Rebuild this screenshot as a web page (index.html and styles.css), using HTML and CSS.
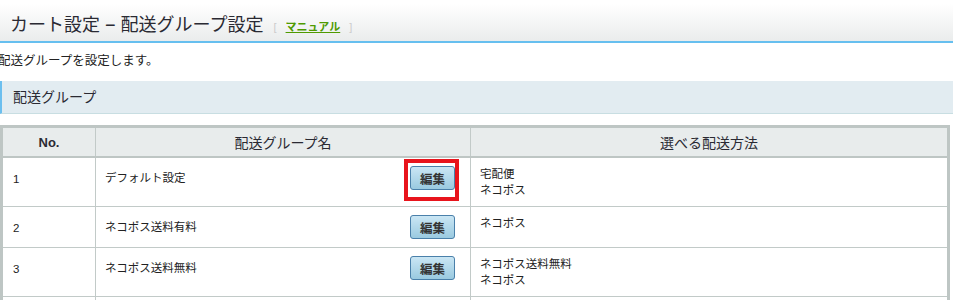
FILE: index.html
```html
<!DOCTYPE html>
<html lang="ja">
<head>
  <meta charset="UTF-8">
  <title>カート設定 - 配送グループ設定</title>
  <link rel="stylesheet" href="styles.css">
</head>
<body>
  <div class="page-head">
    <h1>カート設定 − 配送グループ設定</h1>
    <span class="manual">[ <a href="#">マニュアル</a> ]</span>
  </div>
  <p class="lead">配送グループを設定します。</p>
  <h2 class="section">配送グループ</h2>
  <table class="groups">
    <thead>
      <tr>
        <th class="col-no">No.</th>
        <th class="col-name">配送グループ名</th>
        <th>選べる配送方法</th>
      </tr>
    </thead>
    <tbody>
      <tr>
        <td>1</td>
        <td><div class="name-cell"><span>デフォルト設定</span><span class="btn-wrap marked"><button class="btn">編集</button></span></div></td>
        <td>宅配便<br>ネコポス</td>
      </tr>
      <tr>
        <td>2</td>
        <td><div class="name-cell"><span>ネコポス送料有料</span><span class="btn-wrap"><button class="btn">編集</button></span></div></td>
        <td>ネコポス</td>
      </tr>
      <tr>
        <td>3</td>
        <td><div class="name-cell"><span>ネコポス送料無料</span><span class="btn-wrap"><button class="btn">編集</button></span></div></td>
        <td>ネコポス送料無料<br>ネコポス</td>
      </tr>
      <tr class="more">
        <td></td>
        <td></td>
        <td></td>
      </tr>
    </tbody>
  </table>
</body>
</html>
```

FILE: styles.css
```css
body {
  margin: 0;
  font-family: "Liberation Sans", "Noto Sans CJK JP", sans-serif;
  color: #222;
  background: #fff;
  overflow: hidden;
}
.page-head {
  height: 43px;
  padding: 9px 0 0 10px;
  box-sizing: border-box;
  display: flex;
  align-items: center;
  background: linear-gradient(#fff 10%, #eaecec);
  border-bottom: 2px solid #66bfef;
}
.page-head h1 {
  margin: 0;
  font-size: 18px;
  font-weight: normal;
  line-height: 30px;
  color: #2a2a33;
}
.manual {
  margin-left: 10px;
  font-size: 11px;
  color: #ccc;
  padding-top: 2px;
}
.manual a {
  color: #4f9a00;
  font-weight: bold;
  margin: 0 6px;
}
.lead {
  margin: 9px 0 0 -2px;
  font-size: 12.5px;
  line-height: 18px;
}
.section {
  margin: 11px 0 11px 0;
  padding-left: 11px;
  font-size: 14px;
  font-weight: normal;
  line-height: 32px;
  background: #e2ecf1;
  border-left: 2px solid #6bbfef;
  border-bottom: 1px solid #c8dee2;
  color: #2a2a33;
}
.groups {
  width: 950px;
  border-collapse: collapse;
  border: 3px solid #bec6c4;
  font-size: 11.5px;
}
.groups th {
  height: 28px;
  padding: 0;
  font-size: 14px;
  font-weight: normal;
  color: #2a2a33;
  background: #e8ecec;
  border-bottom: 2px solid #bec6c4;
  border-left: 1px solid #c2cac8;
}
.groups .col-no {
  width: 92px;
  font-weight: bold;
  font-size: 13px;
}
.groups .col-name {
  width: 374px;
}
.groups td {
  padding: 8px 9px;
  line-height: 16px;
  vertical-align: top;
  border-left: 1px solid #c2cac8;
  border-top: 1px solid #c2cac8;
}
.groups td:first-child {
  padding-top: 13px;
  padding-left: 10px;
}
.groups .more td {
  height: 30px;
}
.name-cell {
  display: flex;
  align-items: center;
  justify-content: space-between;
  padding-right: 6px;
}
.btn-wrap {
  position: relative;
  display: inline-block;
}
.btn {
  width: 45px;
  height: 24px;
  padding: 0;
  font-family: "Noto Sans CJK JP", sans-serif;
  font-size: 12.5px;
  font-weight: bold;
  color: #333;
  background: linear-gradient(#cae6f4, #9acae0);
  border: 1px solid #4a80aa;
  border-radius: 3px;
}
.marked::after {
  content: "";
  position: absolute;
  left: -6px;
  right: -4px;
  top: -7px;
  bottom: -11px;
  border: 4px solid #e8141c;
}
```
